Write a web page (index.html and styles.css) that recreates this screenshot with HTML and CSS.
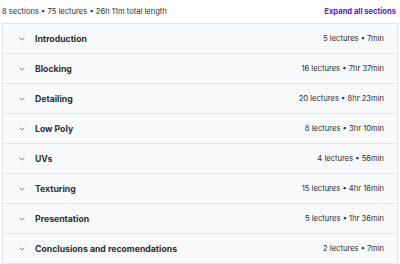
FILE: index.html
```html
<!DOCTYPE html>
<html lang="en">
<head>
  <meta charset="UTF-8" />
  <title>Course content</title>
  <link rel="stylesheet" href="styles.css">
</head>
<body>
  <div class="content-header">
    <span class="summary">8 sections • 75 lectures • 26h 11m total length</span>
    <button class="expand-all">Expand all sections</button>
  </div>

  <div class="sections">
    <div class="section">
      <span class="chevron"><svg viewBox="0 0 10 6" width="6" height="4"><path d="M1 1l4 4 4-4" fill="none" stroke="currentColor" stroke-width="1.5"/></svg></span>
      <span class="title">Introduction</span>
      <span class="meta">5 lectures • 7min</span>
    </div>
    <div class="section">
      <span class="chevron"><svg viewBox="0 0 10 6" width="6" height="4"><path d="M1 1l4 4 4-4" fill="none" stroke="currentColor" stroke-width="1.5"/></svg></span>
      <span class="title">Blocking</span>
      <span class="meta">16 lectures • 7hr 37min</span>
    </div>
    <div class="section">
      <span class="chevron"><svg viewBox="0 0 10 6" width="6" height="4"><path d="M1 1l4 4 4-4" fill="none" stroke="currentColor" stroke-width="1.5"/></svg></span>
      <span class="title">Detailing</span>
      <span class="meta">20 lectures • 8hr 23min</span>
    </div>
    <div class="section">
      <span class="chevron"><svg viewBox="0 0 10 6" width="6" height="4"><path d="M1 1l4 4 4-4" fill="none" stroke="currentColor" stroke-width="1.5"/></svg></span>
      <span class="title">Low Poly</span>
      <span class="meta">8 lectures • 3hr 10min</span>
    </div>
    <div class="section">
      <span class="chevron"><svg viewBox="0 0 10 6" width="6" height="4"><path d="M1 1l4 4 4-4" fill="none" stroke="currentColor" stroke-width="1.5"/></svg></span>
      <span class="title">UVs</span>
      <span class="meta">4 lectures • 56min</span>
    </div>
    <div class="section">
      <span class="chevron"><svg viewBox="0 0 10 6" width="6" height="4"><path d="M1 1l4 4 4-4" fill="none" stroke="currentColor" stroke-width="1.5"/></svg></span>
      <span class="title">Texturing</span>
      <span class="meta">15 lectures • 4hr 16min</span>
    </div>
    <div class="section">
      <span class="chevron"><svg viewBox="0 0 10 6" width="6" height="4"><path d="M1 1l4 4 4-4" fill="none" stroke="currentColor" stroke-width="1.5"/></svg></span>
      <span class="title">Presentation</span>
      <span class="meta">5 lectures • 1hr 36min</span>
    </div>
    <div class="section">
      <span class="chevron"><svg viewBox="0 0 10 6" width="6" height="4"><path d="M1 1l4 4 4-4" fill="none" stroke="currentColor" stroke-width="1.5"/></svg></span>
      <span class="title">Conclusions and recomendations</span>
      <span class="meta">2 lectures • 7min</span>
    </div>
  </div>
</body>
</html>
```

FILE: styles.css
```css
body {
  margin: 0;
  padding: 0 2px;
  font-family: "Inter", "Liberation Sans", sans-serif;
  color: #2d2f31;
  background-color: #fff;
}

.content-header {
  display: flex;
  justify-content: space-between;
  align-items: center;
  height: 23px;
}

.summary {
  font-size: 7.6px;
  color: #2d2f31;
}

.expand-all {
  border: none;
  background: none;
  padding: 0 2px 0 0;
  font-family: inherit;
  font-size: 7.6px;
  font-weight: 700;
  color: #5624d0;
  cursor: pointer;
}

.sections {
  border: 1px solid #e3e6e9;
  border-top: none;
}

.section {
  display: flex;
  align-items: center;
  height: 29px;
  border-top: 1px solid #e3e6e9;
  background-color: #f7f9fa;
  padding: 0 13px 0 16px;
}

.chevron {
  display: flex;
  width: 16px;
  color: #6a6f73;
}

.title {
  flex: 1;
  font-size: 8.7px;
  font-weight: 700;
}

.meta {
  font-size: 7.6px;
}
```
